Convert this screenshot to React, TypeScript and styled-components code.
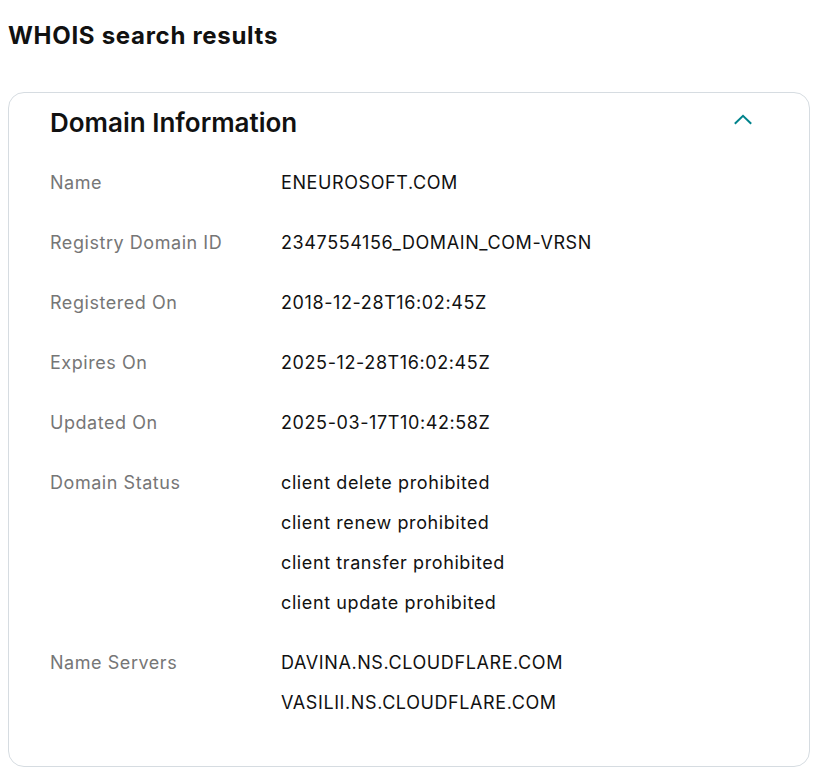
import styled, { createGlobalStyle } from 'styled-components';

const GlobalStyle = createGlobalStyle`
  body {
    margin: 8px;
    background: #fff;
    font-family: Inter, "Noto Sans", sans-serif;
    color: #111;
  }
`;

const Page = styled.div`
  display: flex;
  flex-direction: column;
`;

const Title = styled.h1`
  margin: 12px 0 0 0;
  font-size: 24px;
  line-height: 32px;
  font-weight: 700;
  letter-spacing: 0.7px;
  color: #111;
`;

const Card = styled.section`
  margin-top: 40px;
  border: 1px solid #d6dce1;
  border-radius: 16px;
  padding: 9px 56px 43px 41px;
  width: 802px;
  box-sizing: border-box;
`;

const Header = styled.div`
  display: flex;
  align-items: center;
  justify-content: space-between;
  height: 40px;
  margin-bottom: 21px;
`;

const HeaderTitle = styled.h2`
  margin: 0;
  font-size: 26px;
  font-weight: 600;
  letter-spacing: 0;
  color: #111;
`;

const Toggle = styled.button`
  display: flex;
  align-items: center;
  justify-content: center;
  border: none;
  background: none;
  padding: 0;
  color: #00838c;
  cursor: pointer;
`;

const List = styled.dl`
  margin: 0;
  display: flex;
  flex-direction: column;
  gap: 20px;
`;

const Row = styled.div`
  display: grid;
  grid-template-columns: 231px 1fr;
`;

const Label = styled.dt`
  font-size: 18px;
  line-height: 40px;
  letter-spacing: 0.55px;
  color: #767676;
`;

const Values = styled.dd`
  margin: 0;
  display: flex;
  flex-direction: column;
`;

const Value = styled.span`
  font-size: 18px;
  line-height: 40px;
  letter-spacing: 0.6px;
  color: #111;
`;

const rows: { label: string; values: string[] }[] = [
  { label: 'Name', values: ['ENEUROSOFT.COM'] },
  { label: 'Registry Domain ID', values: ['2347554156_DOMAIN_COM-VRSN'] },
  { label: 'Registered On', values: ['2018-12-28T16:02:45Z'] },
  { label: 'Expires On', values: ['2025-12-28T16:02:45Z'] },
  { label: 'Updated On', values: ['2025-03-17T10:42:58Z'] },
  {
    label: 'Domain Status',
    values: [
      'client delete prohibited',
      'client renew prohibited',
      'client transfer prohibited',
      'client update prohibited',
    ],
  },
  { label: 'Name Servers', values: ['DAVINA.NS.CLOUDFLARE.COM', 'VASILII.NS.CLOUDFLARE.COM'] },
];

function App() {
  return (
    <Page>
      <GlobalStyle />
      <Title>WHOIS search results</Title>
      <Card>
        <Header>
          <HeaderTitle>Domain Information</HeaderTitle>
          <Toggle aria-label="collapse">
            <svg width="20" height="20" viewBox="0 0 20 20" fill="none">
              <path d="M1.8 11.8 L10 3.8 L18.2 11.8" stroke="currentColor" strokeWidth="2" />
            </svg>
          </Toggle>
        </Header>
        <List>
          {rows.map(row => (
            <Row key={row.label}>
              <Label>{row.label}</Label>
              <Values>
                {row.values.map(v => (
                  <Value key={v}>{v}</Value>
                ))}
              </Values>
            </Row>
          ))}
        </List>
      </Card>
    </Page>
  );
}

export default App;
